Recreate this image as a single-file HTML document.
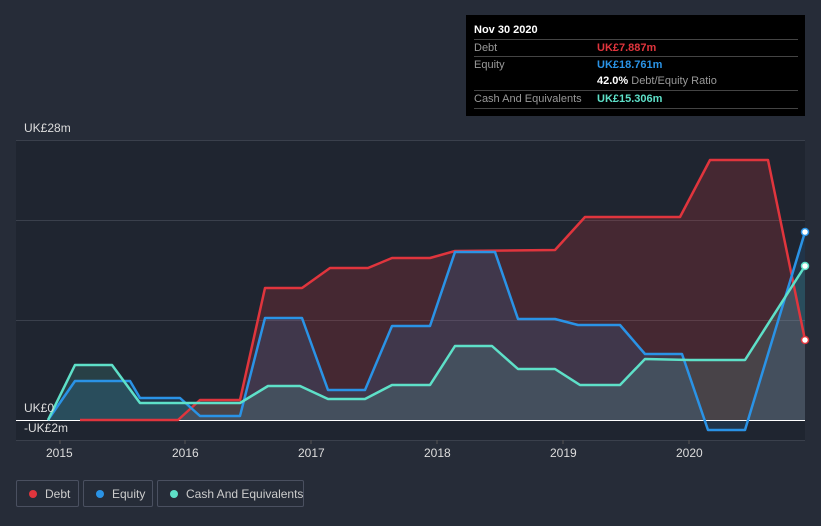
<!DOCTYPE html>
<html><head><style>
html,body{margin:0;width:821px;height:526px;overflow:hidden}
body{background:#262c38;font-family:"Liberation Sans",sans-serif;position:relative}
.tt{position:absolute;left:466px;top:15px;width:339px;height:101px;background:#000;color:#fff;font-size:11px}
.r{position:absolute;left:8px;width:324px;border-top:1px solid #444;height:17px;line-height:17px;color:#999;white-space:nowrap}
.r span{position:absolute;left:123px;font-weight:bold}
.lg{position:absolute;top:480px;height:27px;border:1px solid #4a5060;border-radius:2px;color:#ccc;font-size:12px;line-height:26px;box-sizing:border-box;white-space:nowrap}
.lg i{position:absolute;left:12px;top:9px;width:8px;height:8px;border-radius:50%}
.lg b{font-weight:normal;position:absolute;left:28px}
.ax{position:absolute;color:#ddd;font-size:12px}
</style></head><body>
<svg width="821" height="526" style="position:absolute;left:0;top:0">
<rect x="16" y="140" width="789" height="300" fill="#1f2530"/>
<g stroke="#3a404c" stroke-width="1"><line x1="16" y1="140.5" x2="805" y2="140.5"/><line x1="16" y1="220.5" x2="805" y2="220.5"/><line x1="16" y1="320.5" x2="805" y2="320.5"/><line x1="16" y1="440.5" x2="805" y2="440.5"/></g>
<polygon fill="#e0353d" fill-opacity="0.2" points="80,420 178,420 200,400 240,400 265,288 302,288 330,268 368,268 392,258 430,258 455,251 555,250 585,217 680,217 710,160 768,160 805,340 805,420"/>
<polygon fill="#2a8fe0" fill-opacity="0.15" points="48,420 75,381 130,381 140,398 180,398 200,416 240,416 265,318 302,318 328,390 365,390 392,326 430,326 455,252 495,252 518,319 555,319 578,325 620,325 645,354 682,354 708,430 745,430 805,232 805,420"/>
<polygon fill="#5ee0c8" fill-opacity="0.15" points="48,420 75,365 112,365 140,403 240,403 268,386 300,386 328,399 365,399 392,385 430,385 455,346 492,346 518,369 555,369 580,385 620,385 645,359 690,360 745,360 805,266 805,420"/>
<line x1="16" y1="420.5" x2="805" y2="420.5" stroke="#fff" stroke-width="1"/>
<g fill="none" stroke-width="2.5" stroke-linejoin="round">
<polyline stroke="#e0353d" points="80,420 178,420 200,400 240,400 265,288 302,288 330,268 368,268 392,258 430,258 455,251 555,250 585,217 680,217 710,160 768,160 805,340"/>
<polyline stroke="#2a93e6" points="48,420 75,381 130,381 140,398 180,398 200,416 240,416 265,318 302,318 328,390 365,390 392,326 430,326 455,252 495,252 518,319 555,319 578,325 620,325 645,354 682,354 708,430 745,430 805,232"/>
<polyline stroke="#5ee0c8" points="48,420 75,365 112,365 140,403 240,403 268,386 300,386 328,399 365,399 392,385 430,385 455,346 492,346 518,369 555,369 580,385 620,385 645,359 690,360 745,360 805,266"/>
</g>
<circle cx="805" cy="340" r="3.5" fill="#fff" stroke="#e0353d" stroke-width="1.5"/>
<circle cx="805" cy="232" r="3.5" fill="#fff" stroke="#2a93e6" stroke-width="1.5"/>
<circle cx="805" cy="266" r="3.5" fill="#fff" stroke="#5ee0c8" stroke-width="1.5"/>
<g stroke="#555"><line x1="60" y1="440" x2="60" y2="444"/><line x1="185" y1="440" x2="185" y2="444"/><line x1="311" y1="440" x2="311" y2="444"/><line x1="437" y1="440" x2="437" y2="444"/><line x1="563" y1="440" x2="563" y2="444"/><line x1="689" y1="440" x2="689" y2="444"/></g>
</svg>
<div class="ax" style="left:24px;top:121px">UK£28m</div>
<div class="ax" style="left:24px;top:401px">UK£0</div>
<div class="ax" style="left:24px;top:421px">-UK£2m</div>
<div class="ax" style="left:46px;top:446px">2015</div>
<div class="ax" style="left:172px;top:446px">2016</div>
<div class="ax" style="left:298px;top:446px">2017</div>
<div class="ax" style="left:424px;top:446px">2018</div>
<div class="ax" style="left:550px;top:446px">2019</div>
<div class="ax" style="left:676px;top:446px">2020</div>
<div class="tt">
<div style="position:absolute;left:8px;top:9px;font-weight:bold">Nov 30 2020</div>
<div class="r" style="top:24px">Debt<span style="color:#e0353d">UK£7.887m</span></div>
<div class="r" style="top:41px">Equity<span style="color:#2a93e6">UK£18.761m</span></div>
<div class="r" style="top:58px;border-top:none"><span style="color:#fff">42.0% <em style="font-style:normal;font-weight:normal;color:#999">Debt/Equity Ratio</em></span></div>
<div class="r" style="top:75px;border-bottom:1px solid #444">Cash And Equivalents<span style="color:#5ee0c8">UK£15.306m</span></div>
</div>
<div class="lg" style="left:16px;width:63px"><i style="background:#e0353d"></i><b>Debt</b></div>
<div class="lg" style="left:83px;width:70px"><i style="background:#2a93e6"></i><b>Equity</b></div>
<div class="lg" style="left:157px;width:147px"><i style="background:#5ee0c8"></i><b>Cash And Equivalents</b></div>
</body></html>
